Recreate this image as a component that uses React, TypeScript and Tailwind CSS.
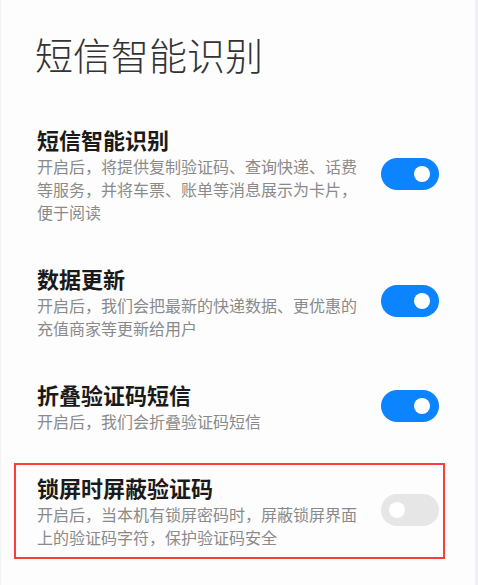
import React from 'react';

interface SettingRow {
  id: string;
  title: string;
  lines: string[];
  on: boolean;
}

const rows: SettingRow[] = [
  {
    id: 'sms-recognize',
    title: '短信智能识别',
    lines: ['开启后，将提供复制验证码、查询快递、话费', '等服务，并将车票、账单等消息展示为卡片，', '便于阅读'],
    on: true,
  },
  {
    id: 'data-update',
    title: '数据更新',
    lines: ['开启后，我们会把最新的快递数据、更优惠的', '充值商家等更新给用户'],
    on: true,
  },
  {
    id: 'fold-code',
    title: '折叠验证码短信',
    lines: ['开启后，我们会折叠验证码短信'],
    on: true,
  },
];

const lockRow: SettingRow = {
  id: 'lock-hide',
  title: '锁屏时屏蔽验证码',
  lines: ['开启后，当本机有锁屏密码时，屏蔽锁屏界面', '上的验证码字符，保护验证码安全'],
  on: false,
};

const Toggle: React.FC<{ on: boolean }> = ({ on }) => (
  <div
    className={`w-[58px] h-[32px] shrink-0 rounded-full flex items-center ${
      on ? 'bg-[#0d84ff] justify-end pr-[9px]' : 'bg-[#e6e6e6] justify-start pl-[8px]'
    }`}
  >
    <div className="w-[16px] h-[16px] rounded-full bg-white" />
  </div>
);

const RowBody: React.FC<{ row: SettingRow }> = ({ row }) => (
  <div className="flex items-center justify-between">
    <div className="w-[330px]">
      <div className="text-[22px] leading-[32px] font-semibold text-[#1a1a1a]">{row.title}</div>
      <div className="text-[16px] leading-[23px] text-[#8a8a8a] whitespace-nowrap">
        {row.lines.map((line) => (
          <div key={line}>{line}</div>
        ))}
      </div>
    </div>
    <Toggle on={row.on} />
  </div>
);

export default function App() {
  return (
    <div
      className="w-[478px] h-[585px] flex bg-[#fdfdfd] overflow-hidden"
      style={{ fontFamily: '"Noto Sans CJK SC", "Noto Sans", sans-serif' }}
    >
      <div className="w-px bg-[#f1f2f4]" />
      <main className="flex-1 flex flex-col">
        {/* Page title */}
        <h1 className="pt-[30px] pl-[34px] text-[38px] leading-[48px] font-light text-[#333333]">
          短信智能识别
        </h1>

        <div className="mt-[26px] flex flex-col">
          {rows.map((row) => (
            <div key={row.id} className="pl-[36px] pr-[36px] py-[19px]">
              <RowBody row={row} />
            </div>
          ))}

          {/* Highlighted row */}
          <div className="mt-[11px] ml-[13px] mr-[30px] border-2 border-[#ff3b3b] pl-[21px] pr-[4px] pt-[6px] pb-[8px]">
            <RowBody row={lockRow} />
          </div>
        </div>
      </main>
      <div className="w-[3px] bg-[#eef0f4]" />
    </div>
  );
}
